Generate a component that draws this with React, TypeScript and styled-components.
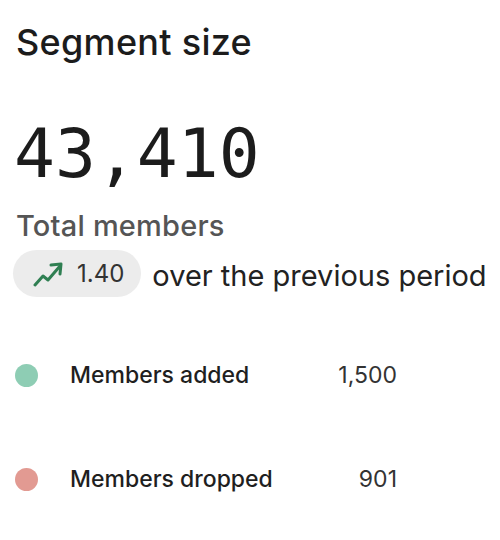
import React from "react";
import styled, { createGlobalStyle } from "styled-components";

const Global = createGlobalStyle`
  html, body { margin: 0; padding: 0; background: #ffffff; }
  body { font-family: Inter, "Noto Sans", "Liberation Sans", sans-serif; }
`;

const Card = styled.div`
  width: 500px;
  height: 540px;
  box-sizing: border-box;
  padding: 20px 0 0 16px;
  background: #ffffff;
  display: flex;
  flex-direction: column;
`;

const Title = styled.h1`
  margin: 0;
  font-size: 36px;
  line-height: 44px;
  font-weight: 500;
  color: #1c1c1c;
  letter-spacing: 0.3px;
`;

const BigNumber = styled.div`
  margin-top: 50px;
  font-family: "DejaVu Sans Mono", "Liberation Mono", monospace;
  font-size: 68px;
  line-height: 80px;
  color: #1c1c1c;
  margin-left: -2px;
`;

const Subtitle = styled.div`
  margin-top: 14px;
  font-size: 29px;
  line-height: 36px;
  font-weight: 500;
  color: #555555;
  letter-spacing: 0.2px;
`;

const TrendRow = styled.div`
  margin-top: 6px;
  margin-left: -3px;
  display: flex;
  align-items: center;
  gap: 11px;
`;

const Pill = styled.div`
  height: 47px;
  box-sizing: border-box;
  padding: 0 17px 0 20px;
  border-radius: 24px;
  background: #ececec;
  display: inline-flex;
  align-items: center;
  gap: 14px;
  font-size: 24px;
  color: #333333;
`;

const TrendText = styled.span`
  font-size: 29px;
  color: #222222;
  padding-top: 4px;
`;

const List = styled.div`
  margin-top: 58px;
  display: flex;
  flex-direction: column;
  gap: 64px;
`;

const Row = styled.div`
  width: 382px;
  height: 40px;
  display: grid;
  grid-template-columns: 23px 1fr auto;
  align-items: center;
  column-gap: 32px;
  margin-left: -1px;
`;

const Dot = styled.span<{ $color: string }>`
  width: 23px;
  height: 23px;
  border-radius: 50%;
  background: ${(p) => p.$color};
`;

const Label = styled.span`
  font-size: 23px;
  font-weight: 500;
  color: #1f1f1f;
`;

const Value = styled.span`
  font-size: 23px;
  color: #333333;
  text-align: right;
`;

const TrendIcon = () => (
  <svg width="30" height="26" viewBox="0 0 30 26" fill="none" stroke="#2f7f52" strokeWidth="3" strokeLinecap="round" strokeLinejoin="round">
    <path d="M2 24 L10 15 L15 19 L27 5" />
    <path d="M18 4 L28 3 L27 13" />
  </svg>
);

const rows = [
  { label: "Members added", value: "1,500", color: "#8ecdb4" },
  { label: "Members dropped", value: "901", color: "#e29a92" },
];

export default function App() {
  return (
    <>
      <Global />
      <Card>
        <Title>Segment size</Title>
        <BigNumber>43,410</BigNumber>
        <Subtitle>Total members</Subtitle>
        <TrendRow>
          <Pill>
            <TrendIcon />
            <span>1.40</span>
          </Pill>
          <TrendText>over the previous period</TrendText>
        </TrendRow>
        <List>
          {rows.map((r) => (
            <Row key={r.label}>
              <Dot $color={r.color} />
              <Label>{r.label}</Label>
              <Value>{r.value}</Value>
            </Row>
          ))}
        </List>
      </Card>
    </>
  );
}
